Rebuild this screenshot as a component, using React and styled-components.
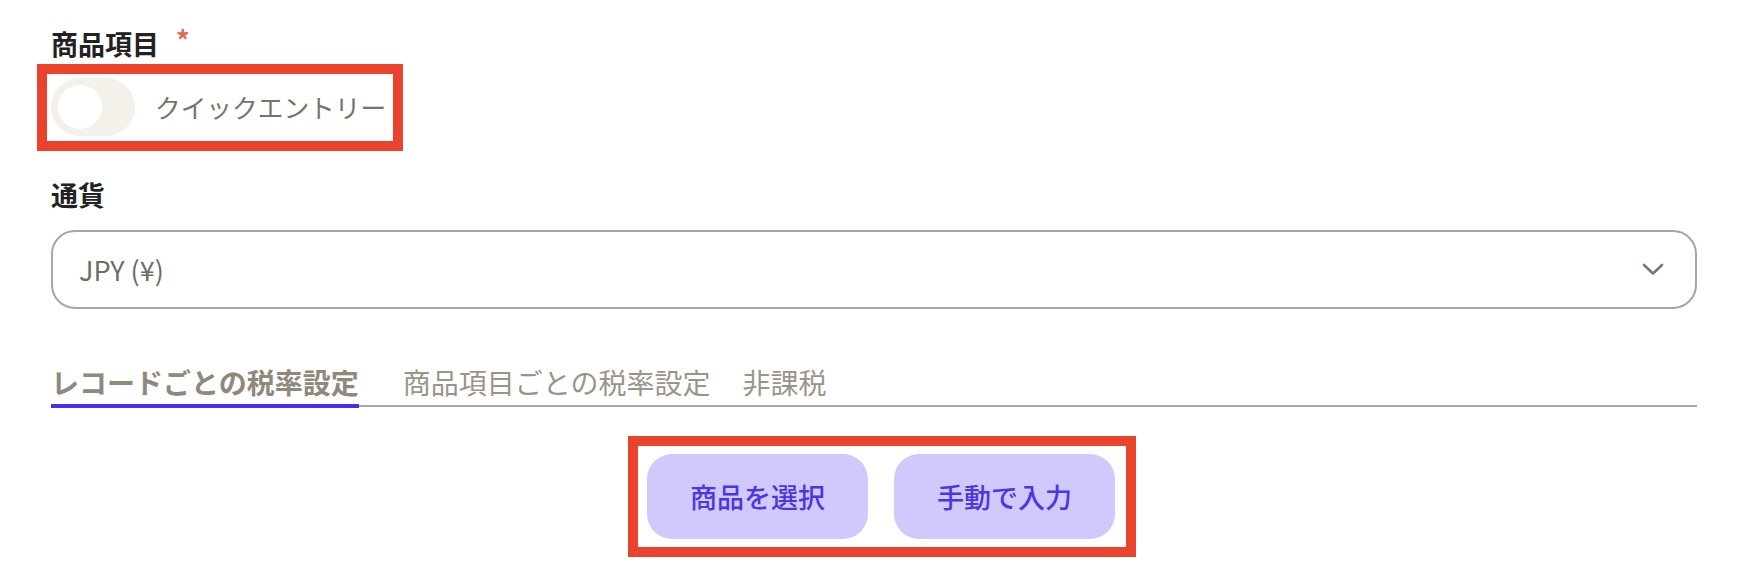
import React, { useState } from 'react';
import styled, { createGlobalStyle } from 'styled-components';

const GlobalStyle = createGlobalStyle`
  body {
    margin: 0;
    background: #ffffff;
    font-family: "Noto Sans CJK JP", "Noto Sans", sans-serif;
  }
`;

const Page = styled.div`
  padding: 25px 51px 0;
`;

const Label = styled.div`
  display: flex;
  align-items: flex-start;
  height: 38px;
  line-height: 38px;
  font-size: 27px;
  font-weight: 700;
  color: #222222;
  margin-top: ${(p) => p.$top || 0}px;
`;

const Required = styled.span`
  color: #e2694d;
  font-size: 27px;
  line-height: 30px;
  margin-left: 17px;
`;

const Highlight = styled.div`
  display: inline-flex;
  border: 10px solid #e9432b;
`;

const ToggleRow = styled(Highlight)`
  align-items: center;
  gap: 20px;
  margin: 1px 0 0 -14px;
  padding: 4px 7px 5px 4px;
`;

const Track = styled.button`
  display: flex;
  align-items: center;
  width: 84px;
  height: 58px;
  padding: 0 7px;
  border: none;
  border-radius: 29px;
  background: ${(p) => (p.$on ? '#4a2ef0' : '#f4f0ea')};
  justify-content: ${(p) => (p.$on ? 'flex-end' : 'flex-start')};
  cursor: pointer;
`;

const Knob = styled.span`
  width: 44px;
  height: 44px;
  border-radius: 50%;
  background: #ffffff;
`;

const ToggleText = styled.span`
  font-size: 25.7px;
  line-height: 38px;
  color: #77736c;
`;

const Select = styled.div`
  display: flex;
  align-items: center;
  justify-content: space-between;
  box-sizing: border-box;
  height: 79px;
  margin-top: 16px;
  padding: 0 31px 0 26px;
  border: 2px solid #a6a6a6;
  border-radius: 24px;
  font-size: 27px;
  color: #6f6b65;
`;

const Tabs = styled.div`
  display: flex;
  margin-top: 54px;
  border-bottom: 2px solid #a8a8a8;
`;

const Tab = styled.button`
  margin: 0 ${(p) => p.$space || 0}px -3px 0;
  padding: 0 0 3px;
  border: none;
  border-bottom: 4px solid ${(p) => (p.$active ? '#4a2ef0' : 'transparent')};
  background: none;
  font-family: inherit;
  font-size: 28px;
  line-height: 38px;
  font-weight: ${(p) => (p.$active ? 700 : 400)};
  color: ${(p) => (p.$active ? '#90887b' : '#9b9489')};
  cursor: pointer;
`;

const Actions = styled.div`
  display: flex;
  justify-content: center;
  margin-top: 29px;
  padding-left: 16px;
`;

const ButtonGroup = styled(Highlight)`
  gap: 26px;
  padding: 8px 11px 8px 9px;
`;

const ActionButton = styled.button`
  height: 85px;
  padding: 0 43px;
  border: none;
  border-radius: 25px;
  background: #d0c9fb;
  color: #4b35e4;
  font-family: inherit;
  font-size: 27px;
  font-weight: 500;
  cursor: pointer;
`;

const Chevron = () => (
  <svg width="22" height="13" viewBox="0 0 22 13" fill="none">
    <path d="M2 2 L11 10.5 L20 2" stroke="#7d766b" strokeWidth="2.6" strokeLinecap="round" strokeLinejoin="round" />
  </svg>
);

const tabs = [
  { label: 'レコードごとの税率設定', space: 44 },
  { label: '商品項目ごとの税率設定', space: 32 },
  { label: '非課税', space: 0 },
];

export default function App() {
  const [quick, setQuick] = useState(false);
  const [active, setActive] = useState(0);

  return (
    <Page>
      <GlobalStyle />
      <Label>
        商品項目<Required>*</Required>
      </Label>
      <ToggleRow>
        <Track $on={quick} onClick={() => setQuick(!quick)}>
          <Knob />
        </Track>
        <ToggleText>クイックエントリー</ToggleText>
      </ToggleRow>

      <Label $top={25}>通貨</Label>
      <Select>
        <span>JPY (¥)</span>
        <Chevron />
      </Select>

      <Tabs>
        {tabs.map((t, i) => (
          <Tab key={t.label} $active={active === i} $space={t.space} onClick={() => setActive(i)}>
            {t.label}
          </Tab>
        ))}
      </Tabs>

      <Actions>
        <ButtonGroup>
          <ActionButton>商品を選択</ActionButton>
          <ActionButton>手動で入力</ActionButton>
        </ButtonGroup>
      </Actions>
    </Page>
  );
}
